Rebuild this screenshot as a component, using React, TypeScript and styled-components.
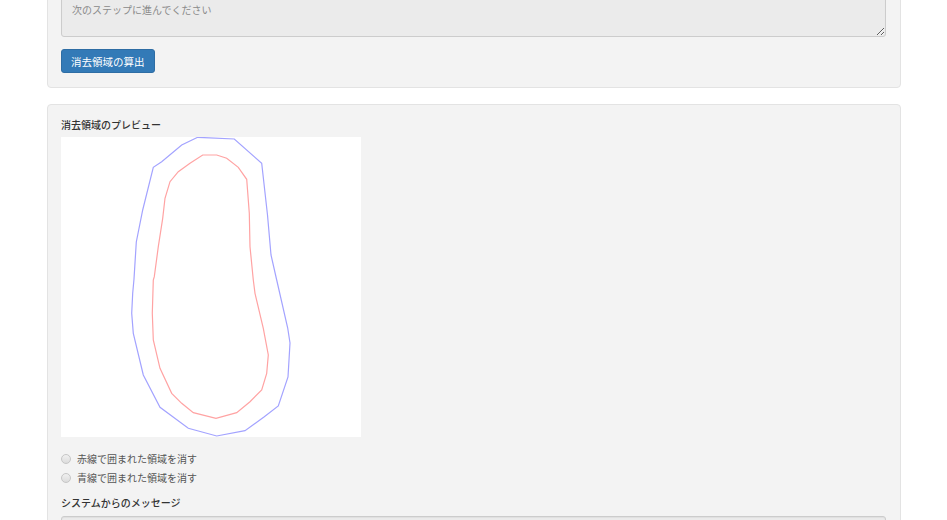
import React from 'react';
import styled, { createGlobalStyle } from 'styled-components';

const GlobalStyle = createGlobalStyle`
  html, body {
    margin: 0;
    padding: 0;
    background: #ffffff;
  }
  body {
    font-family: "Noto Sans CJK JP", "Noto Sans", sans-serif;
    font-size: 10px;
    color: #333;
    overflow: hidden;
  }
`

const Page = styled.div`
  margin: -39px 46px 0 47px;
  display: flex;
  flex-direction: column;
  gap: 16px;
`

const Well = styled.section`
  background: #f3f3f3;
  border: 1px solid #e3e3e3;
  border-radius: 4px;
  padding: 13px 14px 14px 13px;
  display: flex;
  flex-direction: column;
  align-items: flex-start;
`

const Message = styled.textarea<{ h: number; top?: number; pad?: number }>`
  box-sizing: border-box;
  width: 100%;
  height: ${(props) => props.h}px;
  margin: ${(props) => props.top ?? 0}px 0 0;
  padding: ${(props) => props.pad ?? 4}px 10px 4px;
  font-family: inherit;
  font-size: 10px;
  line-height: 14px;
  color: #8a8a8a;
  background: #ebebeb;
  border: 1px solid #cccccc;
  border-radius: 3px;
  box-shadow: inset 0 1px 1px rgba(0, 0, 0, 0.05);
  resize: vertical;
  outline: none;
`

const PrimaryButton = styled.button`
  margin-top: 12px;
  height: 24px;
  padding: 0 9px;
  font-family: inherit;
  font-size: 10.5px;
  color: #ffffff;
  background: #337ab7;
  border: 1px solid #2e6da4;
  border-radius: 3px;
  cursor: pointer;
`

const FieldLabel = styled.div<{ top?: number }>`
  margin-top: ${(props) => props.top ?? 0}px;
  line-height: 14px;
  font-size: 10px;
  font-weight: 500;
  color: #333;
`

const Preview = styled.svg`
  display: block;
  margin-top: 5px;
  width: 300px;
  height: 300px;
  background: #ffffff;
`

const Options = styled.div`
  margin-top: 12px;
  display: flex;
  flex-direction: column;
`

const Option = styled.label`
  display: flex;
  align-items: center;
  gap: 6px;
  height: 19px;
  color: #555;
  font-size: 10px;
  cursor: pointer;
`

const RadioDot = styled.span`
  box-sizing: border-box;
  width: 10px;
  height: 10px;
  border-radius: 50%;
  border: 1px solid #c6c6c6;
  background: linear-gradient(#f0f0f0, #dcdcdc);
`

const outer = [
  [197.7, 137.3], [234.3, 139], [261.7, 163.3], [267.5, 215], [271, 255],
  [276.7, 280], [287.7, 328], [290, 343], [288, 377], [278.3, 406], [264.3, 416.7],
  [245, 430.7], [216.7, 436], [188.3, 428.3], [160, 407.3], [143.3, 375], [133.3, 333.3],
  [131.7, 313.3], [132.7, 293.3], [134, 279], [136.3, 242], [142.7, 210],
  [153.3, 167.3], [161.7, 161.7], [181.7, 145],
]

const inner = [
  [202.7, 155], [216.7, 155], [226.7, 158.3], [238.3, 167.3], [246.7, 179.3],
  [249.3, 213.3], [250, 246.7], [253.3, 280], [255, 293.3], [263.3, 328.3],
  [268.3, 355], [266.7, 373.3], [261.7, 390], [250, 401.7], [236.7, 412.7],
  [216, 418.3], [193.3, 412.7], [181.7, 403.3], [171.7, 393.3], [160, 368.3],
  [153.3, 340], [152.3, 313.3], [153.3, 280], [154.3, 276.7], [158.3, 246.7],
  [162.7, 218.3], [165, 198.3], [170, 181.7], [178.3, 171.7], [190, 163.3],
]

// canvas sits at (61, 137) on the page
const toPoints = (pts: number[][]) =>
  pts.map(([x, y]) => `${(x - 61).toFixed(1)},${(y - 137).toFixed(1)}`).join(' ')

export default function App() {
  return (
    <>
      <GlobalStyle />
      <Page>
        <Well>
          <Message h={62} pad={13} disabled defaultValue={'\n次のステップに進んでください'} />
          <PrimaryButton>消去領域の算出</PrimaryButton>
        </Well>
        <Well>
          <FieldLabel>消去領域のプレビュー</FieldLabel>
          <Preview viewBox="0 0 300 300">
            <polygon points={toPoints(outer)} fill="none" stroke="#a3a3ff" strokeWidth="1.2" />
            <polygon points={toPoints(inner)} fill="none" stroke="#ffa3a3" strokeWidth="1.2" />
          </Preview>
          <Options>
            <Option><RadioDot />赤線で囲まれた領域を消す</Option>
            <Option><RadioDot />青線で囲まれた領域を消す</Option>
          </Options>
          <FieldLabel top={9}>システムからのメッセージ</FieldLabel>
          <Message h={60} top={6} disabled />
        </Well>
      </Page>
    </>
  );
}
